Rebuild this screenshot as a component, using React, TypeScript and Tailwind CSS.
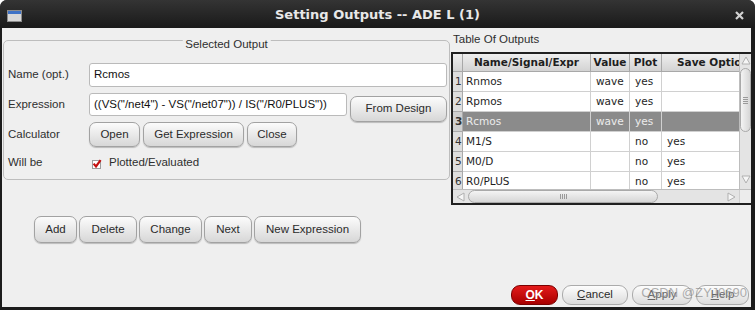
import type { ReactNode } from "react";

type BtnProps = {
  children: ReactNode;
  className?: string;
};

function Btn({ children, className = "" }: BtnProps) {
  return (
    <button
      type="button"
      className={`flex shrink-0 items-center justify-center rounded-[7px] border border-[#a2a2a2] bg-linear-to-b from-[#fcfcfc] to-[#d7d7d7] text-[11.5px] text-[#2b2b2b] shadow-[0_1px_1px_rgba(0,0,0,0.22)] ${className}`}
    >
      {children}
    </button>
  );
}

function DlgBtn({ children, className = "" }: BtnProps) {
  return (
    <button
      type="button"
      className={`flex shrink-0 items-center justify-center rounded-[9px] border border-[#ababab] bg-linear-to-b from-[#fdfdfd] to-[#dcdcdc] text-[11.5px] text-[#2b2b2b] ${className}`}
    >
      {children}
    </button>
  );
}

function Tri({ dir }: { dir: "up" | "down" | "left" | "right" }) {
  const pts = {
    up: "1,8 5,1 9,8",
    down: "1,1 5,8 9,1",
    left: "8,1 1,5 8,9",
    right: "1,1 8,5 1,9",
  }[dir];
  return (
    <svg width="10" height="10" viewBox="0 0 10 10">
      <polygon points={pts} fill="#f6f6f6" stroke="#b0b0b0" strokeWidth="1" />
    </svg>
  );
}

const rows = [
  { n: "1", name: "Rnmos", value: "wave", plot: "yes", save: "" },
  { n: "2", name: "Rpmos", value: "wave", plot: "yes", save: "" },
  { n: "3", name: "Rcmos", value: "wave", plot: "yes", save: "", sel: true },
  { n: "4", name: "M1/S", value: "", plot: "no", save: "yes" },
  { n: "5", name: "M0/D", value: "", plot: "no", save: "yes" },
  { n: "6", name: "R0/PLUS", value: "", plot: "no", save: "yes" },
];

const cols = "grid grid-cols-[10px_128px_39px_32px_77px]";

function OutputsTable() {
  return (
    <div className="border-2 border-r-0 border-[#202020] font-['DejaVu_Sans',sans-serif] text-[10.5px]">
      <div className="flex">
        <div className="w-[286px]">
          <div className={`${cols} h-[18px] border-b border-[#a8a8a8] bg-linear-to-b from-[#efefef] to-[#d3d3d3] font-bold text-[#1e1e1e]`}>
            <div className="border-r border-[#a8a8a8]" />
            <div className="flex items-center justify-center border-r border-[#a8a8a8]">Name/Signal/Expr</div>
            <div className="flex items-center justify-center border-r border-[#a8a8a8]">Value</div>
            <div className="flex items-center justify-center border-r border-[#a8a8a8]">Plot</div>
            <div className="flex items-center overflow-hidden whitespace-nowrap pl-[15px]">Save Options</div>
          </div>
          <div className="h-[117px] overflow-hidden">
            {rows.map((r) => (
              <div
                key={r.n}
                className={`${cols} h-[20px] ${r.sel ? "bg-[#8b8b8b] text-[#ececec]" : "bg-white text-[#1e1e1e]"}`}
              >
                <div
                  className={`flex items-end border-r border-b border-[#a9a9a9] pb-[1px] pl-[2px] text-[#333] ${
                    r.sel ? "bg-[#cfcfcf] font-bold" : "bg-[#dedede]"
                  }`}
                >
                  {r.n}
                </div>
                <div className="flex items-center border-r border-b border-[#d0d0d0] pl-[3px]">{r.name}</div>
                <div className="flex items-center border-r border-b border-[#d0d0d0] pl-[5px]">{r.value}</div>
                <div className="flex items-center border-r border-b border-[#d0d0d0] pl-[5px]">{r.plot}</div>
                <div className="flex items-center border-b border-[#d0d0d0] pl-[5px]">{r.save}</div>
              </div>
            ))}
          </div>
        </div>
        {/* vertical scrollbar */}
        <div className="flex w-[12px] flex-col items-center border-l border-[#bdbdbd] bg-[#e4e4e4]">
          <div className="flex h-[14px] items-center justify-center">
            <Tri dir="up" />
          </div>
          <div className="flex h-[64px] w-[11px] items-center justify-center rounded-[6px] border border-[#a9a9a9] bg-linear-to-r from-[#f4f4f4] to-[#d6d6d6]">
            <div className="flex w-[5px] flex-col gap-[1px]">
              <div className="h-px bg-[#9a9a9a]" />
              <div className="h-px bg-[#9a9a9a]" />
              <div className="h-px bg-[#9a9a9a]" />
              <div className="h-px bg-[#9a9a9a]" />
            </div>
          </div>
          <div className="flex-1" />
          <div className="flex h-[18px] items-center justify-center">
            <Tri dir="down" />
          </div>
        </div>
      </div>
      {/* horizontal scrollbar */}
      <div className="flex h-[14px] border-t border-[#bdbdbd] bg-[#e4e4e4]">
        <div className="flex w-[15px] items-center justify-center">
          <Tri dir="left" />
        </div>
        <div className="flex w-[190px] items-center justify-center rounded-[7px] border border-[#a9a9a9] bg-linear-to-b from-[#f4f4f4] to-[#d6d6d6]">
          <div className="flex h-[5px] gap-[1px]">
            <div className="w-px bg-[#9a9a9a]" />
            <div className="w-px bg-[#9a9a9a]" />
            <div className="w-px bg-[#9a9a9a]" />
            <div className="w-px bg-[#9a9a9a]" />
          </div>
        </div>
        <div className="flex-1" />
        <div className="flex w-[14px] items-center justify-center">
          <Tri dir="right" />
        </div>
        <div className="w-[12px] border-l border-[#cfcfcf] bg-[#ececec]" />
      </div>
    </div>
  );
}

export default function App() {
  return (
    <div className="h-[310px] w-[755px] bg-white">
      <div className="flex h-full flex-col overflow-hidden rounded-t-[7px] bg-[#1c1c1c] font-['Liberation_Sans',Arial,sans-serif]">
        {/* title bar */}
        <div className="grid h-[28px] shrink-0 grid-cols-[40px_1fr_40px] items-center bg-linear-to-b from-[#343434] to-[#1a1a1a]">
          <div className="ml-[7px] mt-[3px] flex h-[12px] w-[15px] flex-col border border-[#8c8c8c] bg-[#d8d8d8]">
            <div className="h-[3px] bg-[#3e72c6]" />
          </div>
          <div className="pt-[2px] text-center font-['DejaVu_Sans',sans-serif] text-[13px] font-bold text-[#e8e8e8]">
            Setting Outputs -- ADE L (1)
          </div>
          <div className="flex justify-end pr-[11px] pt-[3px]">
            <svg width="9" height="9" viewBox="0 0 9 9">
              <path d="M1 1 L8 8 M8 1 L1 8" stroke="#d2d2d2" strokeWidth="2.2" />
            </svg>
          </div>
        </div>

        {/* body */}
        <div className="relative mb-[3px] ml-[2px] mr-[4px] flex flex-1 flex-col bg-[#efefef] text-[11.5px] text-[#2e2e2e]">
          <div className="flex">
            <div className="w-[449px] pl-[1px]">
              <div className="relative mt-[12px] w-[447px] rounded-[5px] border border-[#bdbdbd] pb-[8px] pl-[4px] pr-[2px] pt-[22px]">
                <span className="absolute left-1/2 top-[-4px] -translate-x-1/2 bg-[#efefef] px-[3px] leading-[14px]">
                  Selected Output
                </span>
                <div className="flex h-[24px] items-center">
                  <div className="w-[81px]">Name (opt.)</div>
                  <div className="flex h-full flex-1 items-center rounded-[3px] border border-[#bababa] bg-white pl-[4px] text-[#111]">
                    Rcmos
                  </div>
                </div>
                <div className="mt-[6px] flex h-[29px] items-start">
                  <div className="flex h-[23px] w-[81px] items-center">Expression</div>
                  <div className="flex h-[23px] w-[258px] items-center rounded-[3px] border border-[#bababa] bg-white pl-[4px] text-[#111]">
                    ((VS("/net4") - VS("/net07")) / IS("/R0/PLUS"))
                  </div>
                  <Btn className="ml-[3px] mt-[3px] h-[26px] flex-1">From Design</Btn>
                </div>
                <div className="flex h-[25px] items-center">
                  <div className="w-[81px]">Calculator</div>
                  <div className="flex h-full gap-[3px]">
                    <Btn className="h-full w-[51px]">Open</Btn>
                    <Btn className="h-full w-[101px]">Get Expression</Btn>
                    <Btn className="h-full w-[50px]">Close</Btn>
                  </div>
                </div>
                <div className="mt-[8px] flex h-[16px] items-center">
                  <div className="w-[81px]">Will be</div>
                  <svg width="11" height="11" viewBox="0 0 11 11" className="ml-[2px]">
                    <rect x="1.5" y="2.5" width="8" height="8" fill="#fff" stroke="#9c9c9c" />
                    <path d="M2.6 5.6 L5 8.4 L9.6 2.2" fill="none" stroke="#c41010" strokeWidth="2.2" />
                  </svg>
                  <span className="ml-[7px]">Plotted/Evaluated</span>
                </div>
              </div>

              <div className="mt-[36px] flex gap-[2px] pl-[31px]">
                <Btn className="h-[27px] w-[43px]">Add</Btn>
                <Btn className="h-[27px] w-[58px]">Delete</Btn>
                <Btn className="h-[27px] w-[63px]">Change</Btn>
                <Btn className="h-[27px] w-[48px]">Next</Btn>
                <Btn className="h-[27px] w-[107px]">New Expression</Btn>
              </div>
            </div>

            <div className="flex-1 pt-[3px]">
              <div className="h-[16px] pl-[2px] leading-[16px]">Table Of Outputs</div>
              <div className="mt-[5px]">
                <OutputsTable />
              </div>
            </div>
          </div>

          <div className="flex-1" />

          <div className="flex justify-end gap-[4px] pb-[2px] pr-[2px]">
            <button
              type="button"
              className="flex h-[20px] w-[47px] items-center justify-center rounded-[9px] border border-[#7a0000] bg-linear-to-b from-[#e41a1a] to-[#a80000] text-[12px] font-bold text-white"
            >
              <span>
                <span className="underline">O</span>K
              </span>
            </button>
            <DlgBtn className="h-[20px] w-[66px]">
              <span>
                <span className="underline">C</span>ancel
              </span>
            </DlgBtn>
            <DlgBtn className="h-[20px] w-[60px] text-[#666]">
              <span>
                <span className="underline">A</span>pply
              </span>
            </DlgBtn>
            <DlgBtn className="h-[20px] w-[53px] text-[#666]">
              <span>
                <span className="underline">H</span>elp
              </span>
            </DlgBtn>
          </div>

          <div className="pointer-events-none absolute bottom-[5px] right-[4px] text-[13px] text-[#8c8c8c]/70">
            CSDN @ZYJ0690
          </div>
        </div>
      </div>
    </div>
  );
}
